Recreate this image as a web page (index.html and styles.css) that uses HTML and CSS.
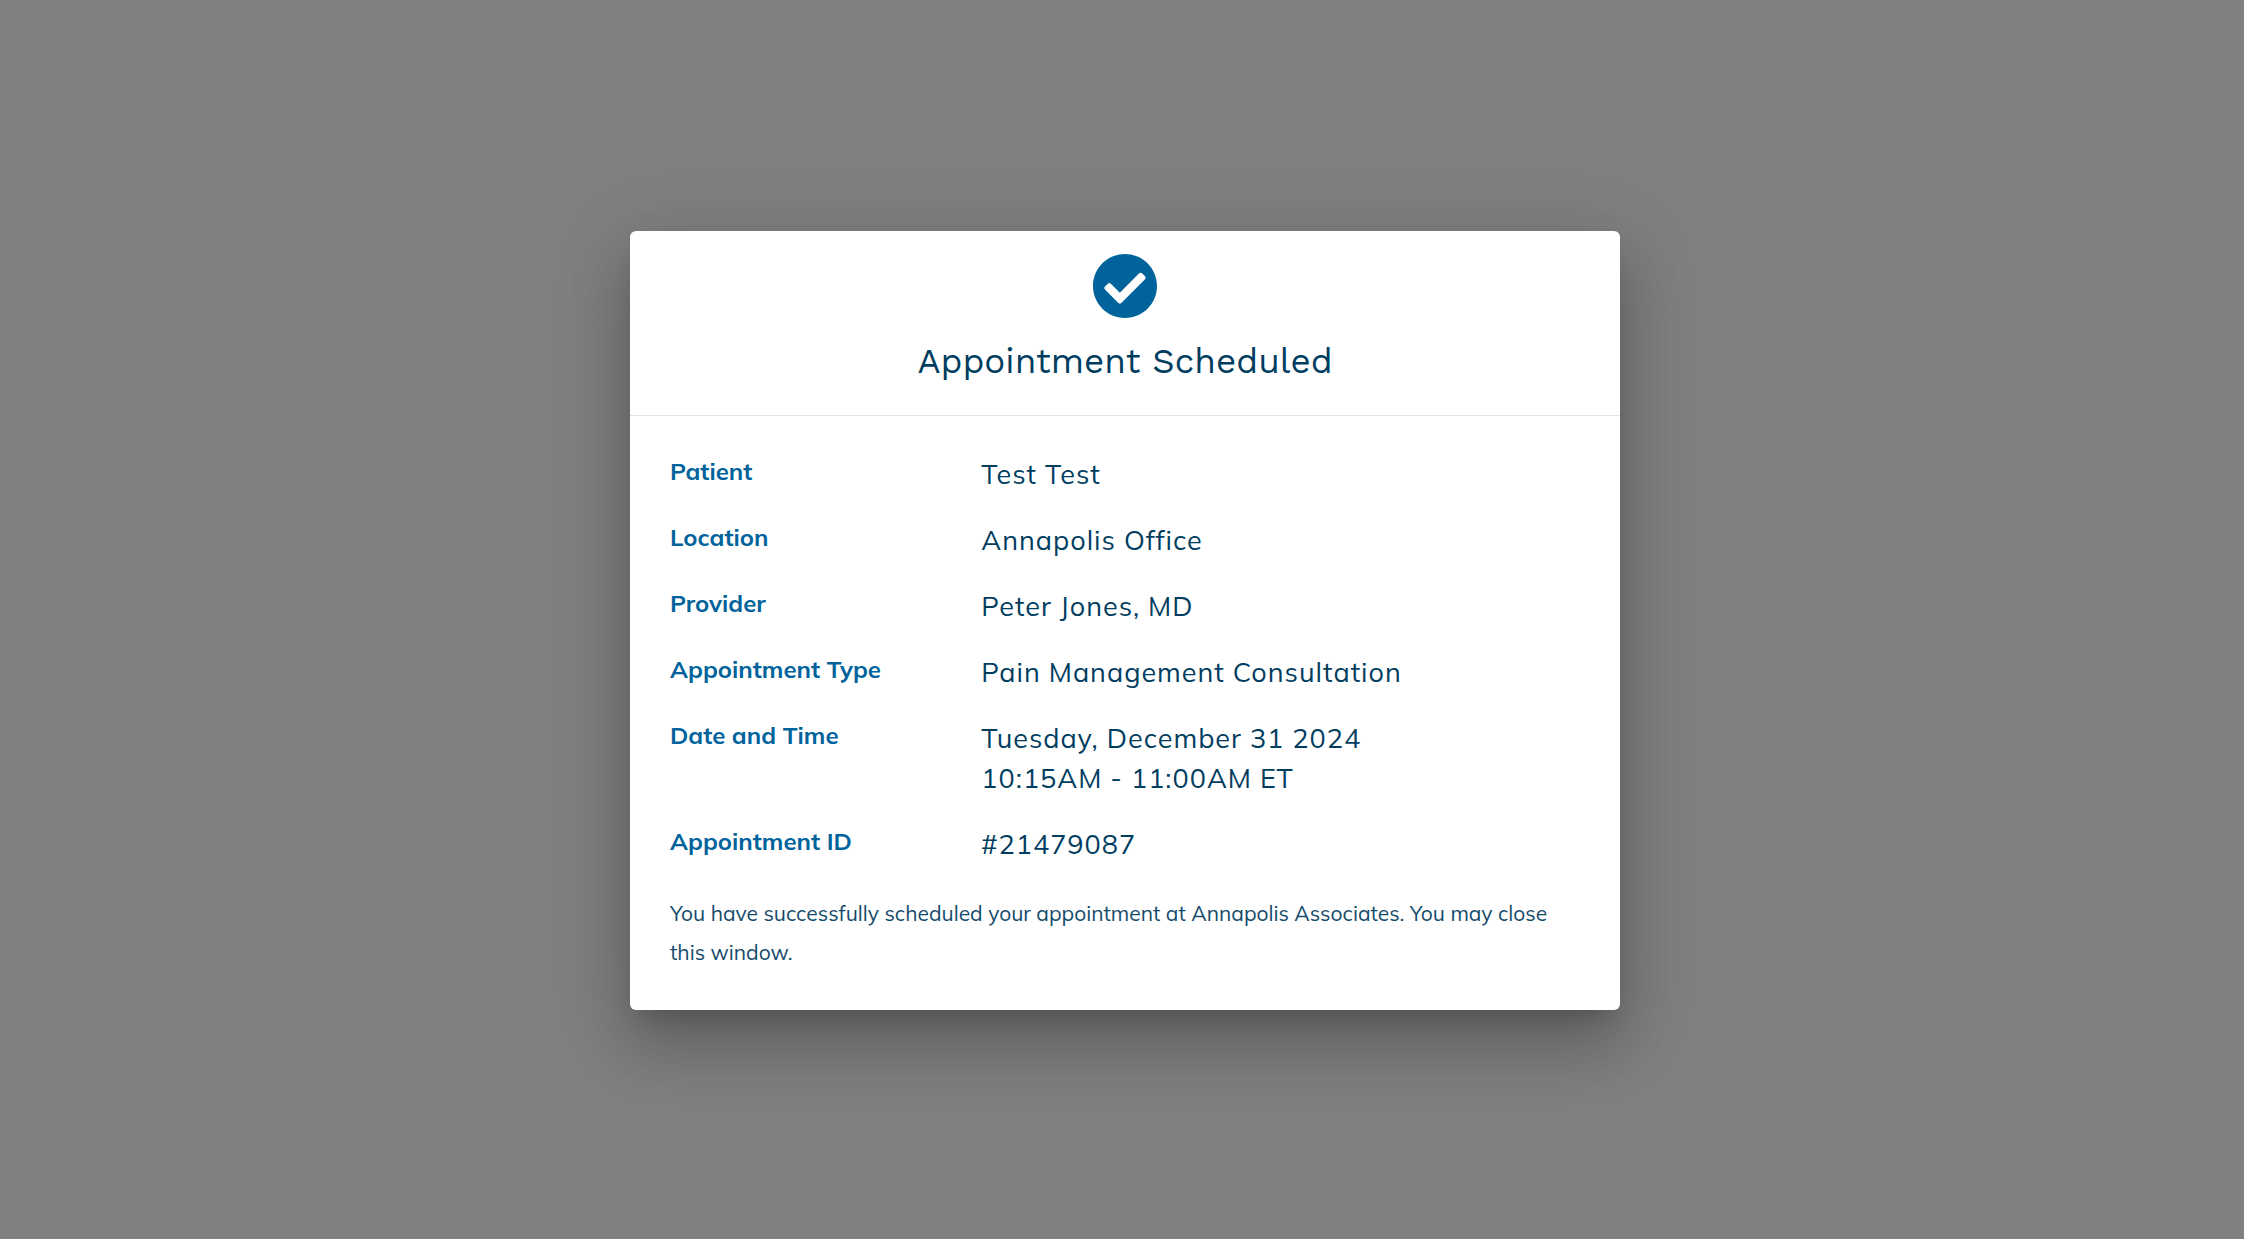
FILE: index.html
```html
<!DOCTYPE html>
<html lang="en">
<head>
    <meta charset="UTF-8">
    <meta name="viewport" content="width=device-width, initial-scale=1.0">
    <title>Appointment Scheduled</title>
    <link rel="stylesheet" href="styles.css">
</head>
<body>
    <div class="overlay">
        <div class="dialog" role="dialog" aria-labelledby="dialogTitle">
            <div class="dialog-header">
                <svg class="check-icon" viewBox="8 8 496 496" aria-hidden="true">
                    <path d="M504 256c0 136.967-111.033 248-248 248S8 392.967 8 256 119.033 8 256 8s248 111.033 248 248zM227.314 387.314l184-184c6.248-6.248 6.248-16.379 0-22.627l-22.627-22.627c-6.248-6.249-16.379-6.249-22.628 0L216 308.118l-70.059-70.059c-6.248-6.248-16.379-6.248-22.628 0l-22.627 22.627c-6.248 6.248-6.248 16.379 0 22.627l104 104c6.249 6.249 16.379 6.249 22.628.001z"/>
                </svg>
                <h1 id="dialogTitle">Appointment Scheduled</h1>
            </div>
            <div class="dialog-body">
                <dl class="details">
                    <dt>Patient</dt>
                    <dd>Test Test</dd>
                    <dt>Location</dt>
                    <dd>Annapolis Office</dd>
                    <dt>Provider</dt>
                    <dd>Peter Jones, MD</dd>
                    <dt>Appointment Type</dt>
                    <dd>Pain Management Consultation</dd>
                    <dt>Date and Time</dt>
                    <dd>Tuesday, December 31 2024<br>10:15AM - 11:00AM ET</dd>
                    <dt>Appointment ID</dt>
                    <dd>#21479087</dd>
                </dl>
                <p class="note">You have successfully scheduled your appointment at Annapolis Associates. You may close this window.</p>
            </div>
        </div>
    </div>
</body>
</html>
```
FILE: styles.css
```css
* {
    box-sizing: border-box;
}

body {
    margin: 0;
    font-family: Mulish, Muli, "Open Sans", sans-serif;
    color: #003d5f;
    background-color: #808080;
}

.overlay {
    display: flex;
    align-items: center;
    justify-content: center;
    min-height: 100vh;
    padding: 2px 0 0 6px;
}

.dialog {
    width: 100%;
    max-width: 990px;
    background: #fff;
    border-radius: 6px;
    box-shadow: 0 18px 25px -12px rgba(0, 0, 0, 0.2),
                0 40px 63px 5px rgba(0, 0, 0, 0.14),
                0 15px 76px 13px rgba(0, 0, 0, 0.12);
}

.dialog-header {
    display: flex;
    flex-direction: column;
    align-items: center;
    padding: 23px 40px 30px;
    border-bottom: 1px solid #e2e4e6;
}

.check-icon {
    width: 64px;
    height: 64px;
    fill: #00639c;
}

h1 {
    margin: 19px 0 0;
    font-family: "Work Sans", Inter, sans-serif;
    font-size: 35px;
    font-weight: 400;
    line-height: 48px;
}

.dialog-body {
    padding: 38px 40px;
}

.details {
    display: grid;
    grid-template-columns: 1fr 2fr;
    column-gap: 12px;
    row-gap: 26px;
    margin: 0 0 30px;
}

.details dt {
    font-size: 24px;
    font-weight: 700;
    line-height: 34px;
    color: #00639c;
}

.details dd {
    margin: 0;
    font-size: 27px;
    line-height: 40px;
    letter-spacing: 1px;
}

.note {
    margin: 0;
    font-size: 21px;
    line-height: 39px;
    color: #154b6b;
}
```
